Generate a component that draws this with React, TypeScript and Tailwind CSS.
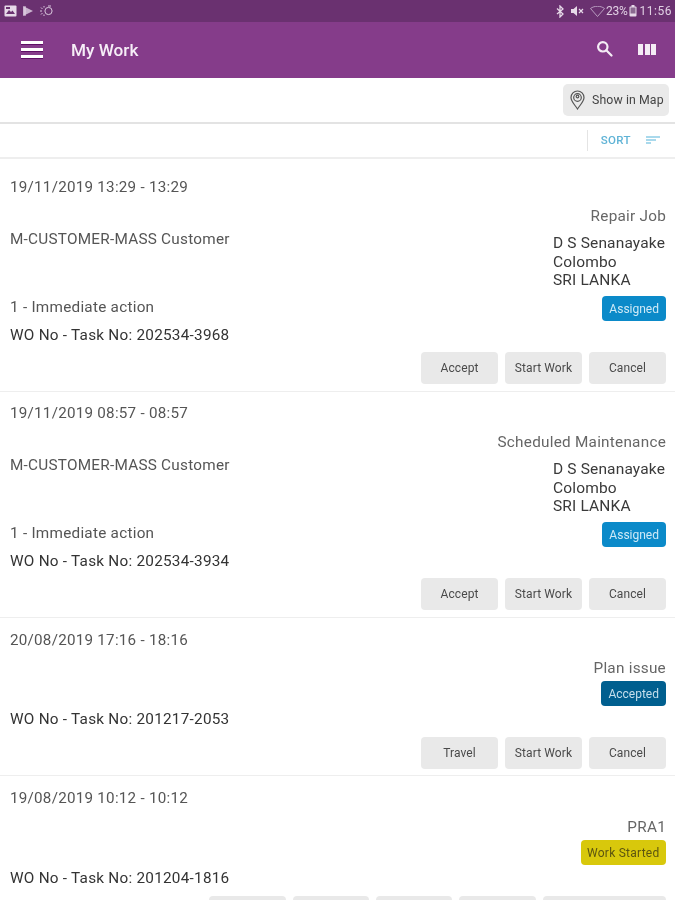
import React from "react";

const font = { fontFamily: "Roboto, 'Liberation Sans', sans-serif" };

function Btn({ label, w = "w-[77px]" }: { label?: string; w?: string }) {
  return (
    <div className={`${w} h-[32px] rounded-[4px] bg-[#e9e9e9] flex items-center justify-center text-[12px] text-[#4a4a4a] tracking-[0.1px]`}>
      {label}
    </div>
  );
}

function Badge({ label, cls }: { label: string; cls: string }) {
  return (
    <div className={`h-[25px] rounded-[4px] flex items-center text-[12px] ${cls}`}>{label}</div>
  );
}

function Address() {
  return (
    <div className="mt-[8px] h-[56px] text-[15.5px] leading-[18.5px] text-[#3a3a3a] tracking-[0.15px] self-end w-[113px]">
      <div className="whitespace-nowrap">D S Senanayake</div>
      <div>Colombo</div>
      <div>SRI LANKA</div>
    </div>
  );
}

function Assigned({
  date,
  type,
  wo,
  top,
}: {
  date: string;
  type: string;
  wo: string;
  top: string;
}) {
  return (
    <div className={`${top} pl-[10px] pr-[9px] border-b border-[#eeeeee] bg-white`}>
      <div className="h-[20px] leading-[20px] text-[15.2px] text-[#555] tracking-[0.25px]">{date}</div>
      <div className="flex justify-between mt-[9px]">
        <div className="pt-[23px] text-[15.3px] leading-[20px] text-[#555] tracking-[0.25px]">
          <div>M-CUSTOMER-MASS Customer</div>
          <div className="mt-[48px]">1 - Immediate action</div>
        </div>
        <div className="flex flex-col items-end">
          <div className="h-[20px] leading-[20px] text-[15.3px] text-[#666] tracking-[0.25px]">{type}</div>
          <Address />
          <div className="mt-[6px]">
            <Badge label="Assigned" cls="px-[7px] bg-[#0b8ac9] text-[#cfeaf7]" />
          </div>
        </div>
      </div>
      <div className="mt-[4px] h-[20px] leading-[20px] text-[15.3px] text-[#333] tracking-[0.25px]">{wo}</div>
      <div className="flex justify-end gap-[7px] mt-[7px] pb-[7px]">
        <Btn label="Accept" />
        <Btn label="Start Work" />
        <Btn label="Cancel" />
      </div>
    </div>
  );
}

function SmallCard({
  date,
  type,
  wo,
  badge,
  buttons,
  gap = "mt-[8px]",
}: {
  date: string;
  type: string;
  wo: string;
  badge: React.ReactNode;
  buttons: React.ReactNode;
  gap?: string;
}) {
  return (
    <div className="pt-[12px] pl-[10px] pr-[9px] border-b border-[#eeeeee] bg-white">
      <div className="h-[20px] leading-[20px] text-[15.2px] text-[#555] tracking-[0.25px]">{date}</div>
      <div className={`flex flex-col items-end ${gap}`}>
        <div className="h-[20px] leading-[20px] text-[15.3px] text-[#666] tracking-[0.25px]">{type}</div>
        <div className="mt-[3px]">{badge}</div>
      </div>
      <div className="mt-[3px] h-[20px] leading-[20px] text-[15.3px] text-[#333] tracking-[0.25px]">{wo}</div>
      <div className="flex justify-end gap-[7px] mt-[8px] pb-[6px]">{buttons}</div>
    </div>
  );
}

export default function App() {
  return (
    <div className="w-[675px] h-[900px] overflow-hidden bg-white flex flex-col blur-[0.4px]" style={font}>
      {/* status bar */}
      <div className="h-[22px] shrink-0 bg-[#6a3170] flex items-center justify-between pl-[4px] pr-[3px] text-[#e0cfe3]">
        <div className="flex items-center gap-[5px]">
          <svg width="13" height="12" viewBox="0 0 13 12">
            <rect x="0.5" y="0.5" width="12" height="11" rx="1" fill="#e6d9e8" />
            <path d="M2 9l3-4 2 2 1.5-1.5L11 9z" fill="#6a3170" />
            <rect x="2" y="2" width="4" height="2" fill="#6a3170" />
          </svg>
          <svg width="12" height="12" viewBox="0 0 12 12">
            <path d="M1 1l10 5-10 5z" fill="#c9b3ce" />
            <path d="M3 1v10" stroke="#e6d9e8" strokeWidth="1" />
          </svg>
          <svg width="15" height="12" viewBox="0 0 15 12" fill="none" stroke="#d9c8dd" strokeWidth="1">
            <circle cx="9.5" cy="6" r="3.6" />
            <path d="M1 6h2M2 2.5l1.5 1.5M2 9.5L3.5 8M5 1v1.5M5 9.5V11M9 1h3" />
          </svg>
        </div>
        <div className="flex items-center text-[12px] leading-none">
          <svg width="9" height="13" viewBox="0 0 9 13" fill="none" stroke="#e6d9e8" strokeWidth="1.3">
            <path d="M1 3.5l6 5.5-3 3V1l3 3-6 5" />
          </svg>
          <svg className="ml-[5px]" width="14" height="12" viewBox="0 0 14 12">
            <path d="M1 4h2.5L7 1v10L3.5 8H1z" fill="#e6d9e8" />
            <path d="M9 4l4 4M13 4l-4 4" stroke="#e6d9e8" strokeWidth="1.2" />
          </svg>
          <svg className="ml-[6px]" width="15" height="11" viewBox="0 0 15 11">
            <path d="M0.5 2.5C4.5-0.5 10.5-0.5 14.5 2.5L7.5 10.5z" fill="none" stroke="#b89cbf" strokeWidth="1" />
          </svg>
          <span className="ml-[1px] tracking-[-0.2px]">23%</span>
          <svg className="ml-[1px]" width="8" height="12" viewBox="0 0 8 12">
            <rect x="0.5" y="1.5" width="7" height="10" rx="1" fill="#e6d9e8" />
            <rect x="2.5" y="0" width="3" height="2" fill="#e6d9e8" />
            <rect x="1.5" y="2.5" width="5" height="6" fill="#8a6a90" />
          </svg>
          <span className="ml-[3px] tracking-[0.5px]">11:56</span>
        </div>
      </div>

      {/* header */}
      <div className="h-[56px] shrink-0 bg-[#853c8a] flex items-center pl-[21px] pr-[19px]">
        <div className="w-[22px] flex flex-col gap-[4px] mt-[-1px]">
          <div className="h-[3px] bg-white shadow-[0_1px_0_#5f0f66]" />
          <div className="h-[3px] bg-white shadow-[0_1px_0_#5f0f66]" />
          <div className="h-[3px] bg-white shadow-[0_1px_0_#5f0f66]" />
        </div>
        <div className="ml-[28px] mt-[2px] text-[17.2px] font-medium text-[#f6eef7]">My Work</div>
        <svg className="ml-auto mt-[-3px]" width="17" height="17" viewBox="0 0 17 17" fill="none" stroke="#f4ecf5" strokeWidth="2.2">
          <circle cx="6.8" cy="6.8" r="4.7" />
          <path d="M10.3 10.3l5.2 5.2" strokeLinecap="round" />
        </svg>
        <div className="ml-[25px] flex gap-[1.5px] h-[11px] mt-[-1px]">
          <div className="w-[5px] bg-[#f4ecf5]" />
          <div className="w-[5px] bg-[#f4ecf5]" />
          <div className="w-[5px] bg-[#f4ecf5]" />
        </div>
      </div>

      {/* map toolbar */}
      <div className="h-[46px] shrink-0 border-b-2 border-[#e3e3e3] flex items-center justify-end pr-[6px]">
        <div className="w-[106px] h-[32px] rounded-[5px] bg-[#eaeaea] flex items-center pl-[7px]">
          <svg width="15" height="20" viewBox="0 0 15 20" fill="none" stroke="#555" strokeWidth="1.2">
            <path d="M7.5 19C5 15 1 11.5 1 7.5a6.5 6.5 0 0113 0C14 11.5 10 15 7.5 19z" />
            <circle cx="7.5" cy="7.5" r="3.8" />
            <circle cx="7.5" cy="6.5" r="1.3" />
          </svg>
          <span className="ml-[7px] text-[12.3px] text-[#444] whitespace-nowrap tracking-[0.1px]">Show in Map</span>
        </div>
      </div>

      {/* sort row */}
      <div className="h-[35px] shrink-0 border-b-2 border-[#eeeeee] flex items-center justify-end pr-[15px]">
        <div className="h-[21px] w-px bg-[#e4e4e4]" />
        <span className="ml-[13px] text-[11.5px] font-medium text-[#5fb3d6] tracking-[0.4px]">SORT</span>
        <svg className="ml-[15px] mt-[-2px]" width="14" height="8" viewBox="0 0 14 8" fill="#a9d9ec">
          <rect x="0" y="0" width="14" height="2" />
          <rect x="0" y="3" width="10" height="2" />
          <rect x="0" y="6" width="5" height="2" />
        </svg>
      </div>

      <Assigned
        top="pt-[18px]"
        date="19/11/2019 13:29 - 13:29"
        type="Repair Job"
        wo="WO No - Task No: 202534-3968"
      />
      <Assigned
        top="pt-[11px]"
        date="19/11/2019 08:57 - 08:57"
        type="Scheduled Maintenance"
        wo="WO No - Task No: 202534-3934"
      />
      <SmallCard
        date="20/08/2019 17:16 - 18:16"
        type="Plan issue"
        wo="WO No - Task No: 201217-2053"
        badge={<Badge label="Accepted" cls="px-[7px] bg-[#005f8f] text-[#c5dfec]" />}
        buttons={
          <>
            <Btn label="Travel" />
            <Btn label="Start Work" />
            <Btn label="Cancel" />
          </>
        }
      />
      <SmallCard
        gap="mt-[9px]"
        date="19/08/2019 10:12 - 10:12"
        type="PRA1"
        wo="WO No - Task No: 201204-1816"
        badge={<Badge label="Work Started" cls="px-[6.5px] tracking-[0.25px] bg-[#d8c80c] text-[#5c5510]" />}
        buttons={
          <>
            <Btn />
            <Btn w="w-[76px]" />
            <Btn w="w-[76px]" />
            <Btn />
            <Btn w="w-[123px]" />
          </>
        }
      />
    </div>
  );
}
